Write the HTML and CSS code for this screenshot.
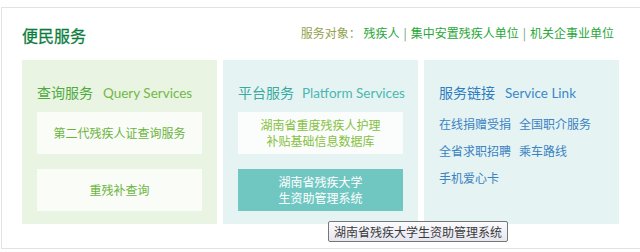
FILE: index.html
```html
<!DOCTYPE html>
<html lang="zh-CN">
<head>
  <meta charset="UTF-8" />
  <title>便民服务</title>
  <link rel="stylesheet" href="styles.css">
</head>
<body>

<div class="panel">
  <div class="head">
    <h2>便民服务</h2>
    <div class="targets">
      <span class="lbl">服务对象：</span>
      <a href="#">残疾人</a><span class="sep">|</span><a href="#">集中安置残疾人单位</a><span class="sep">|</span><a href="#">机关企事业单位</a>
    </div>
  </div>

  <div class="cols">
    <div class="col col-query">
      <div class="col-title">查询服务<span>Query Services</span></div>
      <a class="box" href="#">第二代残疾人证查询服务</a>
      <a class="box" href="#">重残补查询</a>
    </div>

    <div class="col col-platform">
      <div class="col-title">平台服务<span>Platform Services</span></div>
      <a class="box" href="#">湖南省重度残疾人护理<br>补贴基础信息数据库</a>
      <a class="box active" href="#">湖南省残疾大学<br>生资助管理系统</a>
    </div>

    <div class="col col-link">
      <div class="col-title">服务链接<span>Service Link</span></div>
      <ul class="links">
        <li><a href="#">在线捐赠受捐</a><a href="#">全国职介服务</a></li>
        <li><a href="#">全省求职招聘</a><a href="#">乘车路线</a></li>
        <li><a href="#">手机爱心卡</a></li>
      </ul>
    </div>
  </div>
</div>

<div class="tooltip">湖南省残疾大学生资助管理系统</div>

</body>
</html>
```

FILE: styles.css
```css
body { margin: 0; background: #fff; font-family: "Noto Sans CJK SC", sans-serif; font-size: 12px; overflow: hidden; }
a { text-decoration: none; }

.panel { margin: 7px 0 0 1px; height: 240px; border: 1px solid #e2e2e2; border-right: 0; padding: 0 21px 0 20px; }

.head { display: flex; justify-content: space-between; align-items: center; padding: 17px 5px 0 0; }
.head h2 { margin: 0; font-size: 16px; line-height: 20px; font-weight: normal; color: #0b7d3b; -webkit-text-stroke: 0.3px #0b7d3b; }
.targets { margin-bottom: 4px; line-height: 16px; color: #2aa53a; }
.targets .lbl { color: #93a24e; }
.targets a { color: #27a737; }
.targets .sep { color: #6b9f6b; margin: 0 4px; }

.cols { display: grid; grid-template-columns: repeat(3, 195px); gap: 6px; margin-top: 15px; }
.col { height: 164px; padding: 22px 15px 0; box-sizing: border-box; }
.col-title { font-size: 14px; line-height: 20px; margin-bottom: 9px; white-space: nowrap; }
.col-title span { font-family: Lato, "Noto Sans", sans-serif; font-size: 13.5px; margin-left: 10px; }

.box { display: flex; align-items: center; justify-content: center; text-align: center; height: 42px; line-height: 16px; margin-bottom: 15px; }

.col-query { background: #e9f4e3; }
.col-query .col-title { color: #4eaa3c; }
.col-query .col-title span { color: #72b846; }
.col-query .box { background: #f9fcf7; color: #6bb43e; }

.col-platform { background: #e5f4f3; }
.col-platform .col-title { color: #3aaaa1; }
.col-platform .col-title span { color: #4cb7b0; margin-left: 8px; }
.col-platform .box { background: #fbfdfc; color: #86c040; }
.col-platform .box.active { background: #70c7c2; color: #fff; }

.col-link { background: #e5f4f3; }
.col-link .col-title { color: #2d7cbf; }
.col-link .col-title span { color: #3b88c8; }
.links { list-style: none; margin: -2px 0 0; padding: 0; }
.links li { line-height: 27px; }
.links a { color: #3b82c2; margin-right: 8px; }

.tooltip { position: absolute; left: 328px; top: 221px; width: 178px; height: 19px; line-height: 19px; text-align: center; border: 1px solid #767676; border-radius: 2px; background: linear-gradient(#fbfbfd, #e6e6f0); color: #3a3a3a; font-size: 12px; }
```
